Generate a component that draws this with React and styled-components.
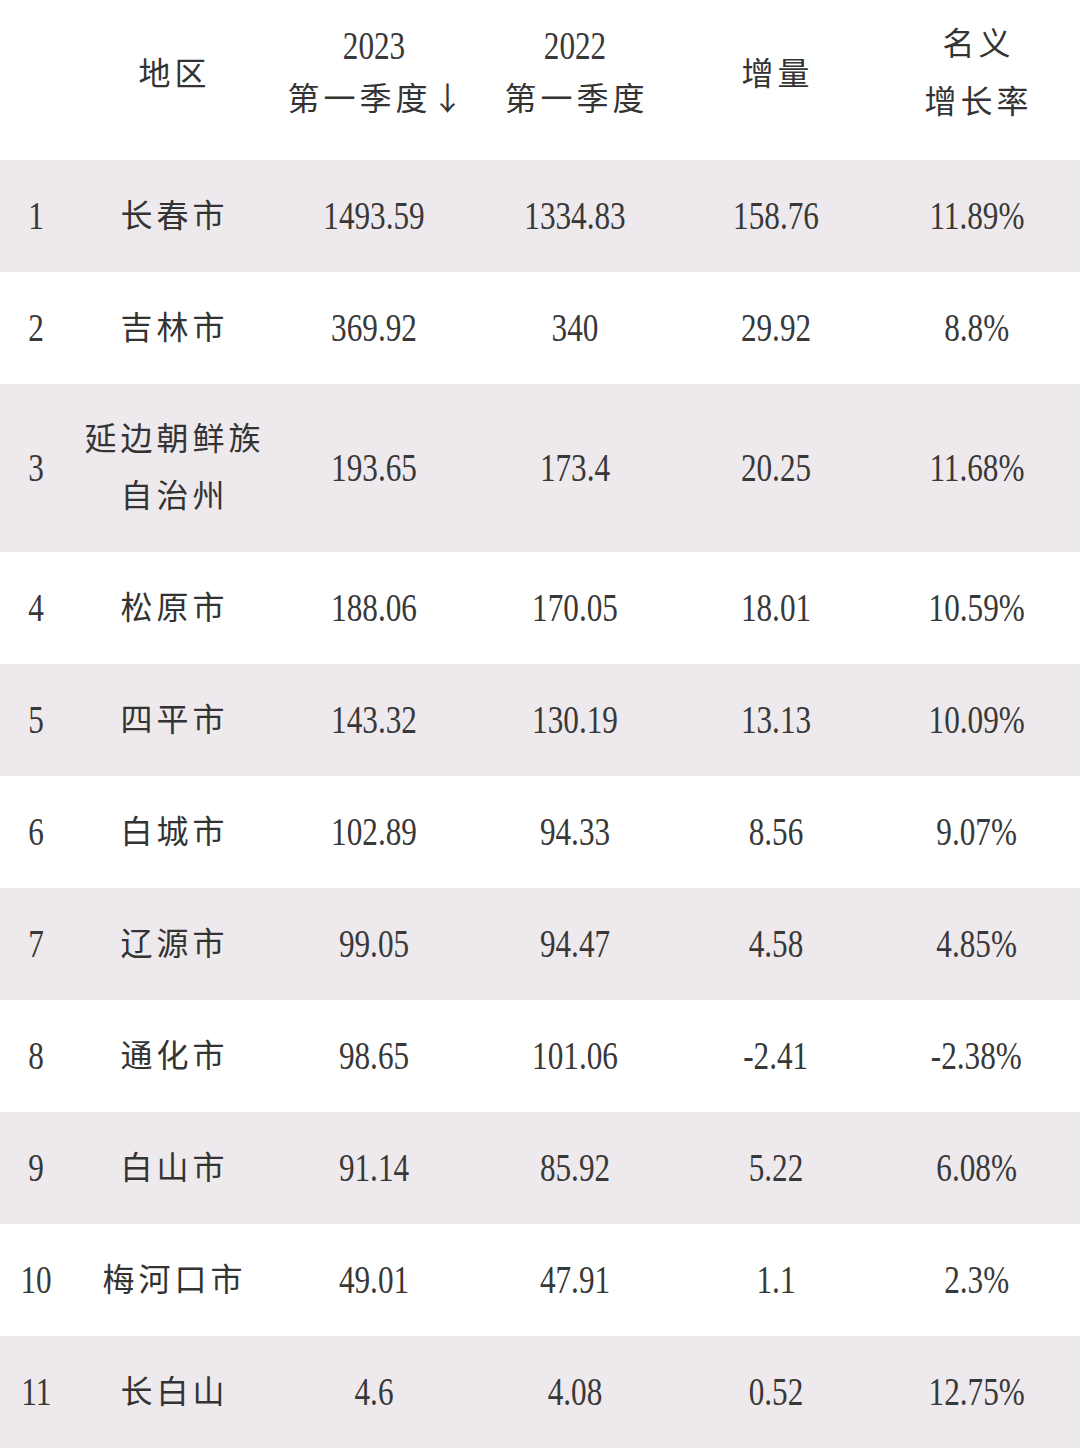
import React from "react";
import styled, { createGlobalStyle } from "styled-components";

const GlobalStyle = createGlobalStyle`
  html, body {
    margin: 0;
    padding: 0;
    background: #ffffff;
  }
  body {
    font-family: "Noto Sans CJK SC", "Liberation Serif", sans-serif;
    color: #333333;
  }
`;

const rows = [
  { no: 1, region: ["长春市"], a: "1493.59", b: "1334.83", inc: "158.76", rate: "11.89%" },
  { no: 2, region: ["吉林市"], a: "369.92", b: "340", inc: "29.92", rate: "8.8%" },
  { no: 3, region: ["延边朝鲜族", "自治州"], a: "193.65", b: "173.4", inc: "20.25", rate: "11.68%" },
  { no: 4, region: ["松原市"], a: "188.06", b: "170.05", inc: "18.01", rate: "10.59%" },
  { no: 5, region: ["四平市"], a: "143.32", b: "130.19", inc: "13.13", rate: "10.09%" },
  { no: 6, region: ["白城市"], a: "102.89", b: "94.33", inc: "8.56", rate: "9.07%" },
  { no: 7, region: ["辽源市"], a: "99.05", b: "94.47", inc: "4.58", rate: "4.85%" },
  { no: 8, region: ["通化市"], a: "98.65", b: "101.06", inc: "-2.41", rate: "-2.38%" },
  { no: 9, region: ["白山市"], a: "91.14", b: "85.92", inc: "5.22", rate: "6.08%" },
  { no: 10, region: ["梅河口市"], a: "49.01", b: "47.91", inc: "1.1", rate: "2.3%" },
  { no: 11, region: ["长白山"], a: "4.6", b: "4.08", inc: "0.52", rate: "12.75%" },
];

const Page = styled.div`
  width: 1080px;
  min-height: 1456px;
  background: #ffffff;
`;

const Row = styled.div`
  display: grid;
  grid-template-columns: 72px repeat(5, 201px);
  height: ${({ $h }) => $h}px;
  box-sizing: border-box;
  padding-bottom: ${({ $pb }) => $pb || 0}px;
  background: ${({ $shaded }) => ($shaded ? "#eee9ed" : "#ffffff")};
`;

const Cell = styled.div`
  display: flex;
  flex-direction: column;
  align-items: center;
  justify-content: center;
  text-align: center;
`;

const Han = styled.span`
  display: block;
  font-family: "Noto Sans CJK SC", sans-serif;
  font-size: 32px;
  font-weight: 400;
  letter-spacing: 4px;
  padding-left: 4px;
  padding-bottom: 7px;
  line-height: ${({ $lh }) => $lh || 40}px;
  color: #333333;
`;

const Num = styled.span`
  display: inline-block;
  font-family: "Liberation Serif", "DejaVu Serif", serif;
  font-size: 40px;
  line-height: ${({ $lh }) => $lh || 44}px;
  color: #383838;
  transform: scaleX(0.78);
  white-space: nowrap;
`;

const Arrow = styled.span`
  font-family: "Noto Sans CJK SC", sans-serif;
  font-size: 32px;
  letter-spacing: 0;
`;

const Header = () => (
  <Row $h={160} $pb={12}>
    <Cell />
    <Cell>
      <Han>地区</Han>
    </Cell>
    <Cell>
      <Num $lh={50}>2023</Num>
      <Han $lh={50}>
        第一季度<Arrow>↓</Arrow>
      </Han>
    </Cell>
    <Cell>
      <Num $lh={50}>2022</Num>
      <Han $lh={50}>第一季度</Han>
    </Cell>
    <Cell>
      <Han>增量</Han>
    </Cell>
    <Cell>
      <Han $lh={51}>名义</Han>
      <Han $lh={51}>增长率</Han>
    </Cell>
  </Row>
);

export default function App() {
  return (
    <Page>
      <GlobalStyle />
      <Header />
      {rows.map((r, i) => (
        <Row key={r.no} $shaded={i % 2 === 0} $h={r.region.length > 1 ? 168 : 112}>
          <Cell>
            <Num>{r.no}</Num>
          </Cell>
          <Cell>
            {r.region.map((line) => (
              <Han key={line} $lh={50}>
                {line}
              </Han>
            ))}
          </Cell>
          <Cell>
            <Num>{r.a}</Num>
          </Cell>
          <Cell>
            <Num>{r.b}</Num>
          </Cell>
          <Cell>
            <Num>{r.inc}</Num>
          </Cell>
          <Cell>
            <Num>{r.rate}</Num>
          </Cell>
        </Row>
      ))}
    </Page>
  );
}
